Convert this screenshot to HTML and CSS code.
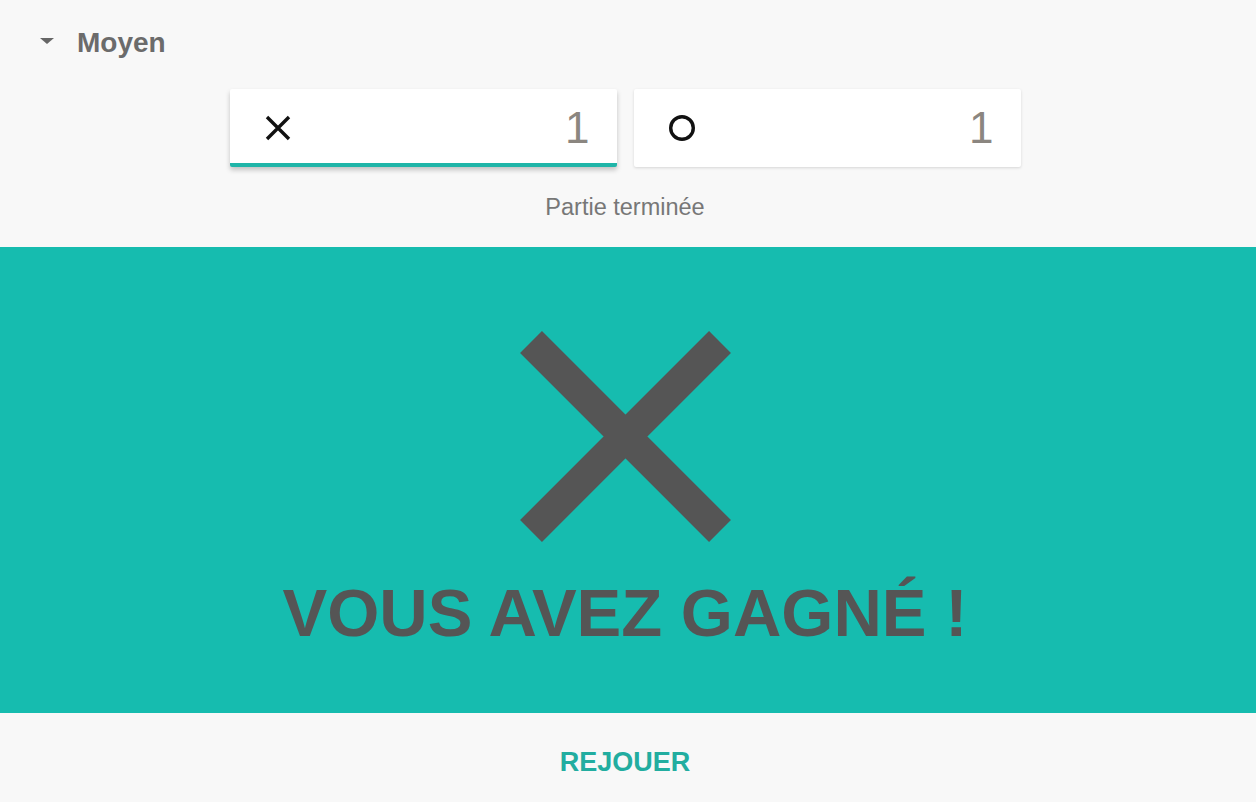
FILE: index.html
```html
<!DOCTYPE html>
<html lang="fr">

<head>
    <meta charset="UTF-8">
    <title>Morpion</title>
    <link rel="stylesheet" href="styles.css">
</head>

<body>

    <div class="level">
        <span class="caret"></span>
        <span class="level-name">Moyen</span>
    </div>

    <div class="scores">
        <div class="score active">
            <svg class="mark" width="28" height="28" viewBox="0 0 28 28">
                <path d="M3 3 L25 25 M25 3 L3 25" stroke="#111" stroke-width="3.4" fill="none" />
            </svg>
            <span class="points">1</span>
        </div>
        <div class="score">
            <svg class="mark" width="28" height="28" viewBox="0 0 28 28">
                <circle cx="14" cy="14" r="11.3" stroke="#111" stroke-width="3.4" fill="none" />
            </svg>
            <span class="points">1</span>
        </div>
    </div>

    <div class="status">Partie terminée</div>

    <div class="result">
        <svg class="winner" width="211" height="211" viewBox="0 0 211 211">
            <path d="M11 11 L200 200 M200 11 L11 200" stroke="#555555" stroke-width="31" fill="none" />
        </svg>
        <div class="result-text">VOUS AVEZ GAGNÉ !</div>
    </div>

    <div class="replay">REJOUER</div>

</body>

</html>
```

FILE: styles.css
```css
body {
    margin: 0;
    background-color: #f8f8f8;
    font-family: "Liberation Sans", Arial, sans-serif;
}

.level {
    display: flex;
    align-items: center;
    gap: 23px;
    padding: 27px 0 0 40px;
    height: 32px;
}

.caret {
    width: 0;
    height: 0;
    border-left: 7px solid transparent;
    border-right: 7px solid transparent;
    border-top: 6px solid #666;
    margin-top: -4px;
}

.level-name {
    font-size: 28px;
    line-height: 32px;
    font-weight: bold;
    color: #6b6b6b;
}

.scores {
    display: flex;
    justify-content: center;
    gap: 17px;
    margin-top: 30px;
    padding-right: 6px;
}

.score {
    width: 387px;
    height: 78px;
    box-sizing: border-box;
    background-color: #ffffff;
    border-radius: 2px;
    box-shadow: 0 1px 3px rgba(0, 0, 0, 0.14);
    display: flex;
    align-items: center;
    justify-content: space-between;
    padding: 0 27px 0 34px;
}

.score.active {
    border-bottom: 4px solid #1fb5a8;
    box-shadow: 0 3px 5px rgba(0, 0, 0, 0.22);
    padding-top: 4px;
}

.points {
    font-size: 44px;
    line-height: 50px;
    color: #8b8680;
}

.status {
    margin-top: 27px;
    text-align: center;
    font-size: 23.5px;
    line-height: 27px;
    color: #777;
    padding-right: 6px;
}

.result {
    margin-top: 26px;
    height: 466px;
    box-sizing: border-box;
    padding: 84px 6px 60px 0;
    background-color: #16bcaf;
    display: flex;
    flex-direction: column;
    align-items: center;
}

.winner {
    display: block;
    margin-bottom: 31px;
}

.result-text {
    font-size: 67px;
    line-height: 80px;
    font-weight: bold;
    color: #555555;
}

.replay {
    margin-top: 33px;
    text-align: center;
    font-size: 27px;
    line-height: 32px;
    font-weight: bold;
    color: #22ada0;
    padding-right: 6px;
}
```
